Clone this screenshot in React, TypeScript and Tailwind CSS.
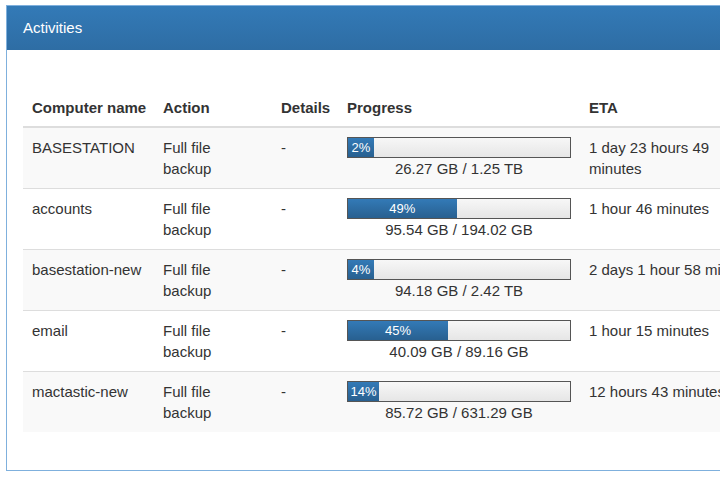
const rows = [
  { name: "BASESTATION", pct: 2, size: "26.27 GB / 1.25 TB", eta: "1 day 23 hours 49 minutes" },
  { name: "accounts", pct: 49, size: "95.54 GB / 194.02 GB", eta: "1 hour 46 minutes" },
  { name: "basestation-new", pct: 4, size: "94.18 GB / 2.42 TB", eta: "2 days 1 hour 58 minutes" },
  { name: "email", pct: 45, size: "40.09 GB / 89.16 GB", eta: "1 hour 15 minutes" },
  { name: "mactastic-new", pct: 14, size: "85.72 GB / 631.29 GB", eta: "12 hours 43 minutes" },
];

function ProgressCell({ pct, size }: { pct: number; size: string }) {
  return (
    <div className="flex flex-col">
      <div className="h-[21px] w-[224px] border border-[#555] bg-gradient-to-b from-[#f7f7f7] to-[#e6e6e6] flex">
        <div
          className="h-full min-w-[26px] bg-gradient-to-b from-[#337ab7] to-[#286090] text-white text-[13px] leading-[19px] text-center"
          style={{ width: `${pct}%` }}
        >
          {pct}%
        </div>
      </div>
      <div className="w-[224px] text-center">{size}</div>
    </div>
  );
}

export default function App() {
  return (
    <div className="w-[720px] h-[480px] overflow-hidden bg-white font-['Liberation_Sans',Arial,sans-serif] text-[#333]">
      <div className="ml-[6px] mt-[5px] w-[790px] h-[466px] border border-[#7fb0dd] flex flex-col">
        {/* Heading */}
        <div className="h-[44px] px-[16px] flex items-center bg-gradient-to-b from-[#337ab7] to-[#2e6da4] text-white text-[15px]">
          Activities
        </div>

        {/* Body */}
        <div className="pl-[16px] pt-[39px]">
          <table className="border-collapse text-[15px] leading-[21px] table-fixed w-[745px]">
            <colgroup>
              <col className="w-[131px]" />
              <col className="w-[118px]" />
              <col className="w-[66px]" />
              <col className="w-[242px]" />
              <col className="w-[188px]" />
            </colgroup>
            <thead>
              <tr className="border-b-2 border-[#ddd]">
                <th className="text-left font-bold pl-[9px] pr-[7px] py-[8px]">Computer name</th>
                <th className="text-left font-bold pl-[9px] pr-[7px] py-[8px]">Action</th>
                <th className="text-left font-bold pl-[9px] pr-[7px] py-[8px]">Details</th>
                <th className="text-left font-bold pl-[9px] pr-[7px] py-[8px]">Progress</th>
                <th className="text-left font-bold pl-[9px] pr-[7px] py-[8px]">ETA</th>
              </tr>
            </thead>
            <tbody>
              {rows.map((r, i) => (
                <tr
                  key={r.name}
                  className={`border-t border-[#ddd] first:border-t-0 ${i % 2 === 0 ? "bg-[#f9f9f9]" : "bg-white"}`}
                >
                  <td className="align-top pl-[9px] pr-[7px] py-[9px]">{r.name}</td>
                  <td className="align-top pl-[9px] pr-[7px] py-[9px]">
                    Full file
                    <br />
                    backup
                  </td>
                  <td className="align-top pl-[9px] pr-[7px] py-[9px]">-</td>
                  <td className="align-top pl-[9px] pr-[7px] py-[9px]">
                    <ProgressCell pct={r.pct} size={r.size} />
                  </td>
                  <td className="align-top pl-[9px] pr-[7px] py-[9px]">{r.eta}</td>
                </tr>
              ))}
            </tbody>
          </table>
        </div>
      </div>
    </div>
  );
}
